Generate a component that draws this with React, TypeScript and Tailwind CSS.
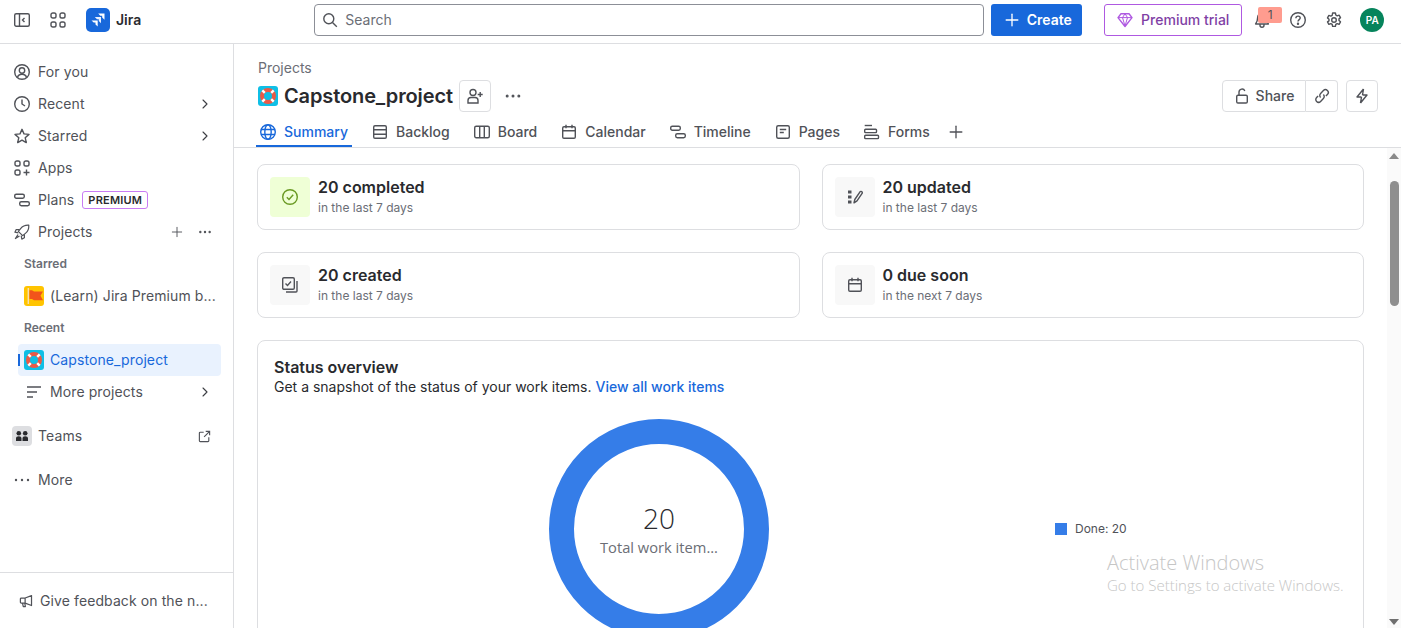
import React from 'react';
import { Plus, ChevronRight, Ellipsis } from 'lucide-react';

type IconProps = { className?: string };

const Svg: React.FC<{ className?: string; children: React.ReactNode }> = ({ className = 'w-4 h-4', children }) => (
  <svg viewBox="0 0 16 16" fill="none" stroke="currentColor" strokeWidth="1.4" className={`${className} shrink-0`}>
    {children}
  </svg>
);

const PanelIcon = ({ className }: IconProps) => (
  <Svg className={className}>
    <rect x="0.7" y="1.7" width="14.6" height="12.6" rx="1.5" />
    <path d="M5.5 2v12M10.5 6 8.5 8l2 2" />
  </Svg>
);
const GridIcon = ({ className }: IconProps) => (
  <Svg className={className}>
    <rect x="1" y="1" width="5" height="5" rx="1.8" />
    <rect x="10" y="1" width="5" height="5" rx="1.8" />
    <rect x="1" y="10" width="5" height="5" rx="1.8" />
    <rect x="10" y="10" width="5" height="5" rx="1.8" />
  </Svg>
);
const AppsIcon = ({ className }: IconProps) => (
  <Svg className={className}>
    <rect x="1" y="1" width="5" height="5" rx="1.8" />
    <rect x="10" y="1" width="5" height="5" rx="1.8" />
    <rect x="1" y="10" width="5" height="5" rx="1.8" />
    <path d="M12.5 9.5v6M9.5 12.5h6" />
  </Svg>
);
const PersonCircleIcon = ({ className }: IconProps) => (
  <Svg className={className}>
    <circle cx="8" cy="8" r="7.3" />
    <circle cx="8" cy="6.5" r="2.7" />
    <path d="M3.5 13.5c.5-2.2 2.2-3.2 4.5-3.2s4 1 4.500 3.200" />
  </Svg>
);
const ClockIcon = ({ className }: IconProps) => (
  <Svg className={className}>
    <circle cx="8" cy="8" r="7.3" />
    <path d="M8 3.500V8l3 2" />
  </Svg>
);
const StarIcon = ({ className }: IconProps) => (
  <Svg className={className}>
    <path d="M8 1.300 10 5.900l5 .5-3.800 3.300 1.100 4.900L8 12.100l-4.300 2.500 1.100-4.900L1 6.400l5-.5Z" strokeLinejoin="round" />
  </Svg>
);
const TimelineIcon = ({ className }: IconProps) => (
  <Svg className={className}>
    <rect x="0.700" y="2.200" width="9.600" height="4" rx="1.600" />
    <rect x="5.700" y="9.700" width="9.600" height="4" rx="1.600" />
  </Svg>
);
const RocketIcon = ({ className }: IconProps) => (
  <Svg className={className}>
    <path d="M14.800 1.200c-3.600-.2-6.300 1-8.200 3.400L4.300 7.400l4.300 4.300 2.800-2.300c2.400-1.900 3.600-4.600 3.400-8.200Z" strokeLinejoin="round" strokeWidth="1.200" />
    <path d="M5.500 5.600H2.200L.9 8.200l3.400.6M10.400 10.500v3.300l-2.600 1.300-.6-3.400M4 10.500 1.400 14.600 5.500 12" strokeLinejoin="round" strokeWidth="1.200" />
  </Svg>
);
const ListIcon = ({ className }: IconProps) => (
  <Svg className={className}>
    <path d="M1 3h14M1 8h10M1 13h6" />
  </Svg>
);
const ExternalIcon = ({ className }: IconProps) => (
  <Svg className={className}>
    <path d="M7 2.700H2.700a1 1 0 0 0-1 1v9.600a1 1 0 0 0 1 1h9.600a1 1 0 0 0 1-1V9M9.500 1.700h4.800v4.800M14 2 7.500 8.500" />
  </Svg>
);
const MegaphoneIcon = ({ className }: IconProps) => (
  <Svg className={className}>
    <path d="M14.300 1.800v11.400L7 10.400H2.600a1 1 0 0 1-1-1V5.600a1 1 0 0 1 1-1H7ZM7 4.600v5.800M4 10.400l.9 4h2.400l-.7-4" strokeLinejoin="round" />
  </Svg>
);
const SearchIcon = ({ className }: IconProps) => (
  <Svg className={className}>
    <circle cx="6.800" cy="6.800" r="5" />
    <path d="m10.500 10.500 4.300 4.300" />
  </Svg>
);
const GemIcon = ({ className }: IconProps) => (
  <Svg className={className}>
    <path d="M4 1.700h8l3 3.900-7 8.900-7-8.900Z" strokeLinejoin="round" />
    <path d="M1 5.600h14M5.500 5.600 8 14l2.500-8.400L8 1.700Z" strokeLinejoin="round" strokeWidth="1" />
  </Svg>
);
const BellIcon = ({ className }: IconProps) => (
  <Svg className={className}>
    <path d="M8 1.200c-2.800 0-4.400 2-4.400 4.600 0 3.400-.8 4.700-2 6.200h12.800c-1.200-1.500-2-2.800-2-6.200C12.400 3.200 10.800 1.200 8 1.200ZM6 12v1.200a2 2 0 0 0 4 0V12" strokeLinejoin="round" />
  </Svg>
);
const HelpIcon = ({ className }: IconProps) => (
  <Svg className={className}>
    <circle cx="8" cy="8" r="7.300" />
    <path d="M5.900 6.200c0-1.300 1-2.100 2.200-2.100s2.100.8 2.100 1.900c0 1.600-2.200 1.600-2.200 3.500" />
    <circle cx="8" cy="11.800" r=".5" fill="currentColor" />
  </Svg>
);
const GearIcon = ({ className }: IconProps) => (
  <Svg className={className}>
    <circle cx="8" cy="8" r="2.300" />
    <path
      d="M6.600 1h2.800l.4 2 1.400.8 1.900-.7 1.400 2.500-1.500 1.300v1.600l1.500 1.300-1.400 2.500-1.900-.7-1.400.8-.4 2H6.600l-.4-2-1.400-.8-1.900.7-1.400-2.500L3 8.800V7.200L1.500 5.900l1.400-2.500 1.900.7 1.400-.8Z"
      strokeLinejoin="round"
    />
  </Svg>
);
const LockOpenIcon = ({ className }: IconProps) => (
  <Svg className={className}>
    <rect x="2.700" y="7.200" width="10.600" height="7.800" rx="1.300" />
    <path d="M5 7V4a3 3 0 0 1 5.800-1" />
  </Svg>
);
const LinkIcon = ({ className }: IconProps) => (
  <Svg className={className}>
    <path d="M6.600 9.400a2.800 2.800 0 0 1 0-4l2.800-2.800a2.800 2.800 0 0 1 4 4l-1.500 1.500" />
    <path d="M9.400 6.600a2.800 2.800 0 0 1 0 4l-2.800 2.800a2.800 2.800 0 0 1-4-4l1.500-1.500" />
  </Svg>
);
const BoltIcon = ({ className }: IconProps) => (
  <Svg className={className}>
    <path d="M9.500 1 3 9h4.500M6.500 15 13 7H8.500M9.500 1 8.500 7M6.500 15l1-6" strokeLinejoin="round" />
  </Svg>
);
const PersonAddIcon = ({ className }: IconProps) => (
  <Svg className={className}>
    <circle cx="6" cy="4.500" r="3" />
    <path d="M1 15v-2.500c0-1.700 1.300-3 3-3h4c1.700 0 3 1.300 3 3V15ZM13.200 4v5M10.700 6.500h5" />
  </Svg>
);
const GlobeIcon = ({ className }: IconProps) => (
  <Svg className={className}>
    <circle cx="8" cy="8" r="7.300" />
    <ellipse cx="8" cy="8" rx="3.200" ry="7.300" />
    <path d="M1 5.500h14M1 10.500h14" />
  </Svg>
);
const BacklogIcon = ({ className }: IconProps) => (
  <Svg className={className}>
    <rect x="1.700" y="1.700" width="12.600" height="12.600" rx="1.300" />
    <path d="M2 5.800h12M2 10.200h12" />
  </Svg>
);
const BoardIcon = ({ className }: IconProps) => (
  <Svg className={className}>
    <rect x="0.700" y="2.200" width="14.600" height="11.600" rx="1.500" />
    <path d="M5.700 2.500v11M10.300 2.500v11" />
  </Svg>
);
const CalendarIcon = ({ className }: IconProps) => (
  <Svg className={className}>
    <rect x="1.700" y="2.700" width="12.600" height="11.600" rx="1.300" />
    <path d="M2 6.700h12M5 .8v3.400M11 .8v3.400" />
  </Svg>
);
const PagesIcon = ({ className }: IconProps) => (
  <Svg className={className}>
    <rect x="1.700" y="1.700" width="12.600" height="12.600" rx="1.500" />
    <path d="M4.800 5.500h6.400M4.800 8.500h4" />
  </Svg>
);
const FormsIcon = ({ className }: IconProps) => (
  <Svg className={className}>
    <path d="M.7 1.500h7.300" />
    <rect x="0.700" y="5.200" width="11.800" height="3.400" rx=".8" />
    <rect x="0.700" y="11.200" width="13.800" height="3.400" rx=".8" />
  </Svg>
);
const CheckCircleIcon = ({ className }: IconProps) => (
  <Svg className={className}>
    <circle cx="8" cy="8" r="7.300" />
    <path d="m4.800 8.300 2.200 2.200 4.200-4.800" />
  </Svg>
);
const ChecksIcon = ({ className }: IconProps) => (
  <Svg className={className}>
    <rect x="0.700" y="0.700" width="11.600" height="11.600" rx="1.300" />
    <path d="m3.500 6.500 2 2 3.500-4M15 4v10a1 1 0 0 1-1 1H4" />
  </Svg>
);
const UpdatedIcon = ({ className }: IconProps) => (
  <Svg className={className}>
    <path d="M1 1.500h3.500v3H1ZM1 6.500h3.500v3H1ZM1 11.500h3.500v3H1Z" fill="currentColor" stroke="none" />
    <path d="M7 13.800 7.800 10.500 13 2.800a1.200 1.200 0 0 1 1.700-.2c.6.400.8 1.200.4 1.800L10 11.800Z" strokeLinejoin="round" />
  </Svg>
);
const DotsIcon = ({ className }: IconProps) => (
  <svg viewBox="0 0 16 16" fill="currentColor" className={`${className} shrink-0`}>
    <circle cx="2" cy="8" r="1.200" />
    <circle cx="8" cy="8" r="1.200" />
    <circle cx="14" cy="8" r="1.200" />
  </svg>
);

const JiraLogo = () => (
  <div className="w-6 h-6 rounded-[5px] bg-[#1868db] flex items-center justify-center shrink-0">
    <svg viewBox="0 0 16 16" className="w-4 h-4" fill="#fff">
      <path d="M8.200 1.500h6.300v6.300l-2.300-2.200V3.800h-1.900Z" />
      <path d="M4.800 5h6.200v6.200l-2.200-2.200V7.200H7Z" fill="#e8f0ff" />
      <path d="M1.500 8.400h6.200v6.200l-2.200-2.200v-1.800H3.700Z" />
    </svg>
  </div>
);

const LifebuoyTile = () => (
  <div className="w-5 h-5 rounded-[3px] bg-[#0fbfe6] shrink-0">
    <svg viewBox="0 0 20 20" className="w-full h-full">
      <circle cx="10" cy="10" r="6" fill="none" stroke="#ea5a47" strokeWidth="4" />
      <path d="M4.300 4.300 6.800 6.800M15.700 4.300 13.200 6.800M4.300 15.700 6.800 13.200M15.700 15.700 13.200 13.200" stroke="#fff" strokeWidth="2.400" />
    </svg>
  </div>
);

const FlagTile = () => (
  <div className="w-5 h-5 rounded-[3px] bg-[#ffc400] shrink-0">
    <svg viewBox="0 0 20 20" className="w-full h-full">
      <path d="M4.300 2v16" stroke="#f7dfae" strokeWidth="1.400" />
      <path d="M5.500 4.300h2.500l2 1.200h9l-2.500 4.300 2.500 4.500H10l-2-1.200H5.500Z" fill="#f2541b" />
    </svg>
  </div>
);

const NavRow: React.FC<{
  icon: React.ReactNode;
  label: string;
  chevron?: boolean;
  children?: React.ReactNode;
}> = ({ icon, label, chevron, children }) => (
  <div className="h-8 flex items-center pl-[14px] pr-[20px] text-[#505258]">
    {icon}
    <span className="ml-2 text-sm tracking-[0.1px]">{label}</span>
    {children}
    {chevron && <ChevronRight className="ml-auto w-4 h-4 text-[#3b3d42]" strokeWidth={1.600} />}
  </div>
);

const TopBar = () => (
  <header className="h-[44px] flex items-center border-b border-[#dddee1] shrink-0 pb-[3px] text-[#505258]">
    <PanelIcon className="w-4 h-4 ml-[14px]" />
    <GridIcon className="w-4 h-4 ml-5" />
    <div className="ml-5">
      <JiraLogo />
    </div>
    <span className="ml-[6px] text-sm font-semibold text-[#292a2e]">Jira</span>
    <div className="ml-[173px] w-[670px] h-8 border border-[#8c8f97] rounded-[4px] flex items-center pl-[7px]">
      <SearchIcon className="w-4 h-4 text-[#505258]" />
      <span className="ml-[7px] text-sm text-[#6b6e76]">Search</span>
    </div>
    <button className="ml-[7px] w-[91px] h-8 rounded-[3px] bg-[#1868db] text-white text-sm font-semibold flex items-center justify-center gap-[5px]">
      <Plus className="w-5 h-5" strokeWidth={1.600} />
      Create
    </button>
    <button className="ml-[22px] w-[138px] h-8 rounded-[3px] border border-[#af59e1] text-[#803fa5] text-sm font-medium flex items-center justify-center gap-2">
      <GemIcon className="w-4 h-4 text-[#af59e1]" />
      Premium trial
    </button>
    <div className="relative ml-[12px] w-4 h-4">
      <BellIcon className="w-4 h-4" />
      <span className="absolute -top-[5px] left-[4px] w-6 h-4 rounded-[2px] bg-[#ff9c8f] text-[#505258] text-xs leading-[15px] text-center">
        1
      </span>
    </div>
    <HelpIcon className="w-4 h-4 ml-[20px]" />
    <GearIcon className="w-4 h-4 ml-5" />
    <div className="ml-[18px] w-6 h-6 rounded-full bg-[#06845c] text-white text-[10px] font-semibold flex items-center justify-center">
      PA
    </div>
  </header>
);

const Sidebar = () => (
  <aside className="w-[234px] shrink-0 border-r border-[#dddee1] flex flex-col">
    <nav className="pt-3 flex-1">
      <NavRow icon={<PersonCircleIcon />} label="For you" />
      <NavRow icon={<ClockIcon />} label="Recent" chevron />
      <NavRow icon={<StarIcon />} label="Starred" chevron />
      <NavRow icon={<AppsIcon />} label="Apps" />
      <NavRow icon={<TimelineIcon />} label="Plans">
        <span className="ml-2 h-[18px] px-[5px] rounded-[3px] border border-[#c97cf4] text-[11px] leading-[16px] font-semibold text-[#292a2e] tracking-[0.2px]">
          PREMIUM
        </span>
      </NavRow>
      <NavRow icon={<RocketIcon />} label="Projects">
        <Plus className="ml-auto w-4 h-4" strokeWidth={1.400} />
        <Ellipsis className="ml-[12px] w-4 h-4" strokeWidth={1.600} />
      </NavRow>
      <div className="h-8 pl-6 flex items-center text-xs font-semibold text-[#6b6e76]">Starred</div>
      <div className="h-8 pl-6 pr-[16px] flex items-center gap-[6px] text-[#505258]">
        <FlagTile />
        <span className="text-sm tracking-[0.1px] truncate whitespace-nowrap">(Learn) Jira Premium b...</span>
      </div>
      <div className="h-8 pl-6 flex items-center text-xs font-semibold text-[#6b6e76]">Recent</div>
      <div className="relative ml-[18px] mr-3 h-8 pl-[6px] flex items-center gap-[6px] rounded-[4px] bg-[#e9f2fe] text-[#1868db]">
        <span className="absolute left-0 top-[10px] h-3 w-[2px] bg-[#1868db]" />
        <LifebuoyTile />
        <span className="text-sm tracking-[0.1px]">Capstone_project</span>
      </div>
      <div className="h-8 pl-[26px] pr-5 flex items-center text-[#505258]">
        <ListIcon className="w-4 h-4" />
        <span className="ml-2 text-sm tracking-[0.1px]">More projects</span>
        <ChevronRight className="ml-auto w-4 h-4 text-[#3b3d42]" strokeWidth={1.600} />
      </div>
      <div className="mt-[12px] h-8 pl-3 pr-[22px] flex items-center text-[#505258]">
        <div className="w-5 h-5 rounded-[4px] bg-[#dddee1] flex items-center justify-center">
          <svg viewBox="0 0 14 14" className="w-[14px] h-[14px]" fill="#292a2e">
            <circle cx="3.800" cy="4.300" r="2.300" />
            <circle cx="10.200" cy="4.300" r="2.300" />
            <path d="M1 12V9.500C1 8 2 7.300 3.800 7.300S6.500 8 6.500 9.500V12ZM7.500 12V9.500c0-1.500 1-2.200 2.700-2.200S13 8 13 9.500V12Z" />
          </svg>
        </div>
        <span className="ml-[6px] text-sm tracking-[0.1px]">Teams</span>
        <ExternalIcon className="ml-auto w-[13px] h-[13px]" />
      </div>
      <div className="mt-[12px] h-8 pl-[14px] flex items-center text-[#505258]">
        <DotsIcon className="w-4 h-4" />
        <span className="ml-2 text-sm tracking-[0.1px]">More</span>
      </div>
    </nav>
    <div className="h-[56px] shrink-0 border-t border-[#dddee1] pl-[19px] flex items-center text-[#505258]">
      <MegaphoneIcon className="w-[14px] h-[14px]" />
      <span className="ml-[7px] text-sm tracking-[0.1px]">Give feedback on the n...</span>
    </div>
  </aside>
);

const tabs = [
  { label: 'Summary', icon: GlobeIcon, active: true },
  { label: 'Backlog', icon: BacklogIcon },
  { label: 'Board', icon: BoardIcon },
  { label: 'Calendar', icon: CalendarIcon },
  { label: 'Timeline', icon: TimelineIcon },
  { label: 'Pages', icon: PagesIcon },
  { label: 'Forms', icon: FormsIcon },
];

const ProjectHeader = () => (
  <div className="shrink-0 border-b border-[#dddee1] pt-[16px] h-[104px] flex flex-col">
    <div className="pl-6 pr-[23px] text-sm leading-[16px] text-[#6b6e76]">Projects</div>
    <div className="mt-[4px] pl-6 pr-[23px] h-8 flex items-center">
      <LifebuoyTile />
      <h1 className="ml-[6px] text-[20px] font-semibold tracking-[-0.12px] text-[#292a2e]">Capstone_project</h1>
      <div className="ml-[6px] w-8 h-8 rounded-[4px] border border-[#dddee1] flex items-center justify-center text-[#505258]">
        <PersonAddIcon />
      </div>
      <Ellipsis className="ml-3 w-5 h-5 text-[#505258]" strokeWidth={1.600} />
      <div className="ml-auto flex text-[#505258]">
        <div className="w-[84px] h-8 rounded-l-[4px] border border-[#dddee1] flex items-center justify-center gap-[6px] text-sm font-medium">
          <LockOpenIcon />
          Share
        </div>
        <div className="w-8 h-8 rounded-r-[4px] border border-l-0 border-[#dddee1] flex items-center justify-center">
          <LinkIcon />
        </div>
        <div className="ml-2 w-8 h-8 rounded-[4px] border border-[#dddee1] flex items-center justify-center">
          <BoltIcon />
        </div>
      </div>
    </div>
    <div className="mt-auto pl-[22px] flex gap-4 items-stretch h-[32px]">
      {tabs.map((t) => (
        <div
          key={t.label}
          className={`px-1 pt-[4px] flex items-center gap-2 text-sm font-medium border-b-[2px] ${
            t.active ? 'text-[#1868db] border-[#1868db]' : 'text-[#505258] border-transparent'
          }`}
        >
          <t.icon />
          {t.label}
        </div>
      ))}
      <Plus className="ml-[-4px] self-center w-5 h-5 text-[#505258] mt-[1px]" strokeWidth={1.600} />
    </div>
  </div>
);

const StatCard: React.FC<{
  icon: React.ReactNode;
  title: string;
  sub: string;
  tileClass?: string;
}> = ({ icon, title, sub, tileClass = 'bg-[#f8f8f8] text-[#505258]' }) => (
  <div className="h-[66px] rounded-[8px] border border-[#dddee1] flex items-center pl-3">
    <div className={`w-10 h-10 rounded-[4px] flex items-center justify-center ${tileClass}`}>{icon}</div>
    <div className="ml-2 pb-[1px]">
      <div className="text-base leading-[20px] font-semibold text-[#292a2e]">{title}</div>
      <div className="mt-[3px] text-xs leading-[16px] text-[#6b6e76]">{sub}</div>
    </div>
  </div>
);

const StatusOverview = () => (
  <section className="mt-[22px] rounded-[8px] border border-[#dddee1] pt-4 pl-4 h-[400px]">
    <h2 className="text-base leading-[20px] font-semibold text-[#292a2e]">Status overview</h2>
    <p className="text-sm leading-[20px] text-[#292a2e]">
      Get a snapshot of the status of your work items. <span className="text-[#1868db] font-medium">View all work items</span>
    </p>
    <div className="mt-[22px] flex items-center">
      <div className="relative ml-[275px] w-[220px] h-[220px]">
        <svg viewBox="0 0 220 220" className="w-full h-full">
          <circle cx="110" cy="110" r="97.500" fill="none" stroke="#357de8" strokeWidth="25" />
        </svg>
        <div className="absolute inset-0 flex flex-col items-center justify-center font-['Open_Sans',sans-serif]">
          <span className="text-[28px] leading-[36px] font-light text-[#292a2e] -mt-[1px]">20</span>
          <span className="mt-[1px] text-[14.7px] leading-[20px] text-[#6b6e76]">Total work item...</span>
        </div>
      </div>
      <div className="ml-[286px] flex items-center gap-2 text-xs text-[#505258]">
        <span className="w-3 h-3 bg-[#357de8]" />
        Done: 20
      </div>
    </div>
  </section>
);

const Scrollbar = () => (
  <div className="w-[14px] shrink-0 bg-[#fafafa] flex flex-col items-center relative">
    <span className="mt-[5px] w-0 h-0 border-x-[5px] border-x-transparent border-b-[6px] border-b-[#8a8a8a]" />
    <span className="mt-[22px] w-[9px] h-[125px] rounded-full bg-[#8f8f8f]" />
    <span className="mt-auto mb-[3px] w-0 h-0 border-x-[5px] border-x-transparent border-t-[6px] border-t-[#6f6f6f]" />
  </div>
);

export default function App() {
  return (
    <div className="w-[1401px] h-[628px] overflow-hidden bg-white flex flex-col font-['Inter','Liberation_Sans',sans-serif] relative">
      <TopBar />
      <div className="flex-1 flex min-h-0">
        <Sidebar />
        <main className="flex-1 flex flex-col min-w-0">
          <ProjectHeader />
          <div className="flex-1 flex min-h-0">
            <div className="flex-1 min-w-0 overflow-hidden px-[23px] pt-4">
              <div className="grid grid-cols-2 gap-x-[22px] gap-y-[22px]">
                <StatCard
                  icon={<CheckCircleIcon className="w-4 h-4" />}
                  title="20 completed"
                  sub="in the last 7 days"
                  tileClass="bg-[#efffd6] text-[#6a9a23]"
                />
                <StatCard icon={<UpdatedIcon />} title="20 updated" sub="in the last 7 days" />
                <StatCard icon={<ChecksIcon />} title="20 created" sub="in the last 7 days" />
                <StatCard icon={<CalendarIcon />} title="0 due soon" sub="in the next 7 days" />
              </div>
              <StatusOverview />
            </div>
            <Scrollbar />
          </div>
        </main>
      </div>
      <div className="absolute left-[1107px] top-[550px] text-[#c6c6c6] font-['Open_Sans',sans-serif] font-light pointer-events-none">
        <div className="text-[20px] leading-[26px]">Activate Windows</div>
        <div className="text-[15px] leading-[19px]">Go to Settings to activate Windows.</div>
      </div>
    </div>
  );
}
